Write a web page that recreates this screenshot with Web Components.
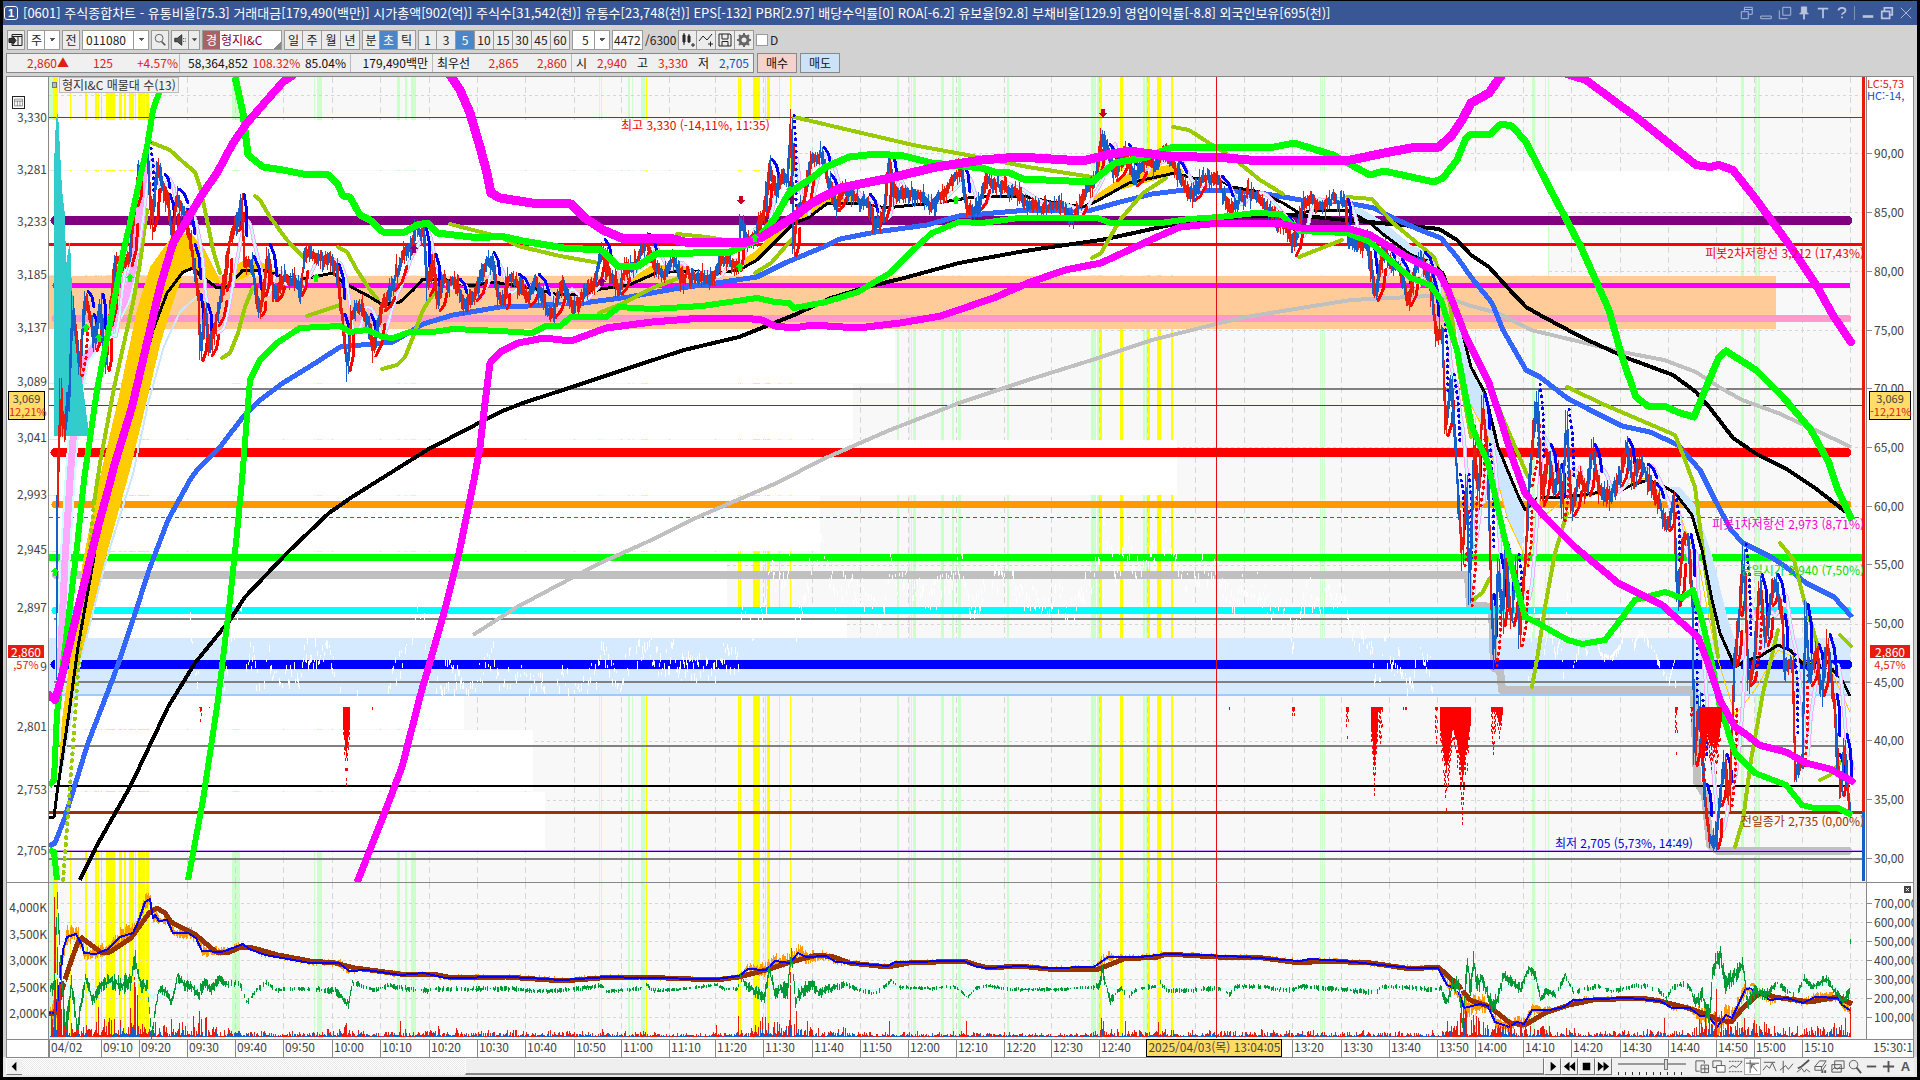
<!DOCTYPE html>
<html lang="ko">
<head>
<meta charset="utf-8">
<title>[0601] 주식종합차트</title>
<style>
  html, body { margin: 0; height: 100%; background: #000; }
  body { font: 12px/14px "Noto Sans CJK KR", "Noto Sans", sans-serif; color: #111; overflow: hidden; }
</style>
</head>
<body>
<trade-window>
  <title-bar slot="title">[0601] 주식종합차트 - 유통비율[75.3] 거래대금[179,490(백만)] 시가총액[902(억)] 주식수[31,542(천)] 유통수[23,748(천)] EPS[-132] PBR[2.97] 배당수익률[0] ROA[-6.2] 유보율[92.8] 부채비율[129.9] 영업이익률[-8.8] 외국인보유[695(천)]</title-bar>
  <chart-toolbar slot="tools"></chart-toolbar>
  <quote-bar slot="quote"></quote-bar>
  <stock-chart slot="chart"></stock-chart>
  <chart-footer slot="footer"></chart-footer>
</trade-window>

<script>
// ---------------------------------------------------------------------------
// Base element
// ---------------------------------------------------------------------------

class BaseElement extends HTMLElement {
  constructor() {
    super();
    this.attachShadow({ mode: 'open' });
  }
  connectedCallback() {
    this.shadowRoot.innerHTML = `<style>:host,*{box-sizing:border-box}${this.css()}</style>${this.template()}`;
  }
  css() { return ''; }
  template() { return ''; }
}

const icon = (body, w = 16, h = 16) =>
  `<svg width="${w}" height="${h}" viewBox="0 0 16 16" fill="none" stroke="currentColor" aria-hidden="true">${body}</svg>`;

// ---------------------------------------------------------------------------
// Frame
// ---------------------------------------------------------------------------

class TradeWindow extends BaseElement {
  css() {
    return `
      :host { display: grid; height: 100vh; padding: 1px 3px 3px 3px;
        grid-template-rows: 24px 27px 24px minmax(0, 1fr) 20px; background: #000; }
      .row { background: #d2d2d2; padding: 0 3px; min-width: 0; min-height: 0; display: grid; }
      .title { background: #3a5795; padding: 0; }
      .foot { background: #e8e8e8; }
    `;
  }
  template() {
    return `
      <div class="row title"><slot name="title"></slot></div>
      <div class="row"><slot name="tools"></slot></div>
      <div class="row"><slot name="quote"></slot></div>
      <div class="row"><slot name="chart"></slot></div>
      <div class="row foot"><slot name="footer"></slot></div>
    `;
  }
}

class TitleBar extends BaseElement {
  css() {
    return `
      :host { display: flex; align-items: center; gap: 5px; color: #fff; padding: 0 3px 0 1px; font-size: 13px; line-height: 20px; white-space: nowrap; }
      .no { width: 14px; height: 14px; border: 1px solid #fff; border-radius: 3px; font: bold 11px/12px "Liberation Sans", sans-serif; text-align: center; }
      .text { flex: 1; overflow: hidden; }
      nav { display: flex; align-items: center; gap: 2px; color: #b9c4dd; }
      button { all: unset; width: 17px; height: 18px; display: grid; place-items: center; }
      i { width: 1px; height: 14px; background: #7f90b8; margin: 0 2px; }
    `;
  }
  template() {
    const b = (name, body) => `<button aria-label="${name}">${icon(body, 14, 14)}</button>`;
    return `
      <span class="no">1</span><span class="text"><slot></slot></span>
      <nav>
        ${b('분리', '<path d="M5 1.5h9v8h-4M5 1.5v4M1.5 6.5h8v8h-8zM5 4h9"/>')}
        ${b('줄이기', '<path d="M2 11.5h12v3H2z"/>')}
        ${b('복사', '<path d="M5.5 1.5h9v9h-9zM1.5 5v9.5H11"/>')}
        ${b('고정', '<path fill="currentColor" d="M5 1h6v6l2 2H3l2-2zM7.500 9h1v6h-1z"/>')}
        ${b('글자', '<path stroke-width="2" d="M2 3h12M8 3v11"/>')}
        ${b('도움말', '<path stroke-width="2" d="M4 5c0-4 8-4 8 0 0 3-4 3-4 5M8 12v2"/>')}
        <i></i>
        ${b('최소화', '<path stroke-width="3" d="M2 12h12"/>')}
        ${b('복원', '<path stroke-width="2" d="M5 5V2h9v8h-3M2 6h9v8H2z"/>')}
        ${b('닫기', '<path d="M2 2l12 12M14 2L2 14"/>')}
      </nav>`;
  }
}

class ChartToolbar extends BaseElement {
  css() {
    return `
      :host { display: flex; align-items: center; gap: 2px; padding-left: 1px; padding-top: 2px; color: #222; }
      button, input, select, .name { font: inherit; height: 20px; margin: 0; color: inherit; border: 1px solid #9a9a9a; border-radius: 0; background: #ececec; }
      button { padding: 0; width: 18px; display: inline-grid; place-items: center; }
      input[type=text], select { background: #fff; padding: 0 3px; }
      select { appearance: none; padding-right: 16px;
        background: linear-gradient(#9a9a9a, #9a9a9a) right 14px top / 1px 100% no-repeat,
          conic-gradient(from -45deg at 50% 100%, #555 25%, transparent 0) right 4px center / 6px 3px no-repeat, #fff; }
      .seg { display: flex; }
      .seg button + button { border-left: 0; }
      .seg .on { background: #4a86c8; color: #fff; }
      .seg.min button { width: 19px; }
      .name { width: 80px; display: flex; line-height: 18px; color: #800040; background: linear-gradient(135deg, #fff 92%, #888 0);}
      .name b { width: 17px; background: #a86464; color: #fff; font-weight: 400; text-align: center; margin-right: 1px; }
      .slash { width: 31px; }
      label { display: inline-flex; align-items: center; gap: 2px; }
      input[type=checkbox] { appearance: none; width: 12px; height: 12px; background: #fff; }
    `;
  }
  template() {
    const seg = (list, on, cls = '') =>
      `<div class="seg ${cls}">${list.map(t => `<button class="${t === on ? 'on' : ''}">${t}</button>`).join('')}</div>`;
    return `
      <button aria-label="목록">${icon('<path d="M4 2.500h10v11H4zM4 4.500h10"/><path d="M10 5v8"/><path fill="#333" d="M1 6.500h4v-2l3 4-3 4v-2H1z"/>')}</button>
      <select aria-label="구분" style="width:33px"><option>주</option></select>
      <button>전</button>
      <select aria-label="종목코드" style="width:67px"><option>011080</option></select>
      <button aria-label="검색">${icon('<circle cx="7" cy="6" r="4.500" stroke="#555"/><path stroke="#555" stroke-width="2" d="M10 10l4 4"/>', 14, 14)}</button>
      <div class="seg"><button aria-label="소리">${icon('<path fill="#555" d="M2 6h3l5-4v12L5 10H2zM12 6v1M14 6v1M12 9v1M14 9v1"/>', 14, 14)}</button><button style="width:11px" aria-label="소리 메뉴">${icon('<path fill="#444" stroke="none" d="M2 5h12l-6 7z"/>', 7, 7)}</button></div>
      <div class="name"><b>경</b><span>형지I&amp;C</span></div>
      ${seg(['일', '주', '월', '년'], '', 'min')}
      ${seg(['분', '초', '틱'], '초')}
      ${seg(['1', '3', '5', '10', '15', '30', '45', '60'], '5', 'min')}
      <select aria-label="간격" style="width:38px;padding-left:9px"><option>5</option></select>
      <input type="text" aria-label="봉수" value="4472" style="width:31px;padding:0 1px"><span class="slash">/6300</span>
      <div class="seg min">
        <button aria-label="봉 추가">${icon('<path fill="#444" d="M3 3h2v7H3zM8 4h2v6H8zM4 1v12M9 2v9M11 13h4M13 11v4"/>')}</button>
        <button aria-label="지표 추가">${icon('<path d="M1 9l4-5 4 4 5-6M10 12h5M12.500 9.500v5"/>')}</button>
        <button aria-label="저장">${icon('<path d="M2 2h11l1 1v11H2zM5 2v5h6V2M5 14V9.500h6V14"/>')}</button>
        <button aria-label="설정">${icon('<circle cx="8" cy="8" r="4" stroke-width="3" stroke="#666"/><path stroke="#666" stroke-width="2" d="M8 1v3M8 12v3M1 8h3M12 8h3M3 3l2 2M11 11l2 2M13 3l-2 2M5 11l-2 2"/>')}</button>
      </div>
      <label><input type="checkbox">D</label>`;
  }
}

class QuoteBar extends BaseElement {
  css() {
    return `
      :host { display: flex; align-items: flex-start; gap: 3px; padding-top: 1px; }
      .cells { display: flex; height: 20px; border: 1px solid #888; background: #f0f0f0; line-height: 18px; }
      .c { display: flex; justify-content: space-between; white-space: nowrap; padding: 0 4px; border-left: 1px solid #bbb; }
      .c:first-child { border: 0; padding-right: 1px; }
      .c.lead { justify-content: flex-end; gap: 24px; }
      .c.mid { padding-left: 8px; }
      .u { color: #e02010; } .d { color: #1050c8; }
      button { font: inherit; width: 40px; height: 20px; padding: 0; border: 1px solid #888; border-radius: 0; color: #111; }
      .buy { background: #f6d2cc; } .sell { background: #cce2f6; }
    `;
  }
  template() {
    const cell = (w, items, cls = '') => `<span class="c ${cls}" style="width:${w}px">${items.map(([t, c]) => `<span class="${c || ''}">${t}</span>`).join('')}</span>`;
    return `<div class="cells">
      ${cell(172, [['2,860▲', 'u'], ['125', 'u'], ['+4.57%', 'u']], 'lead')}
      ${cell(171, [['58,364,852'], ['108.32%', 'u'], ['85.04%']], 'mid')}
      ${cell(82, [[''], ['179,490백만']])}
      ${cell(139, [['최우선'], ['2,865', 'u'], ['2,860', 'u']])}
      ${cell(182, [['시'], ['2,940', 'u'], ['고'], ['3,330', 'u'], ['저'], ['2,705', 'd']])}
      </div>
      <button class="buy">매수</button><button class="sell">매도</button>`;
  }
}

// ---------------------------------------------------------------------------
// Chart data, in plot units
// ---------------------------------------------------------------------------

const PRICE = '54,817 57,600 58,500 60,430 61,380 64,437 70,390 73,300 77,340 80,370 86,297 92,320 95,345 101,300 104,350 107,365 110,320 116,258 125,265 130,260 136,200 140,165 148,148 152,225 158,165 163,180 168,200 173,240 177,195 186,215 193,250 199,300 201,355 206,310 210,350 217,320 225,285 230,240 237,225 242,200 245,260 252,262 260,310 264,290 268,250 275,295 283,275 293,280 300,290 306,255 315,258 330,262 337,270 343,320 348,365 352,310 362,305 369,320 374,350 383,305 393,285 405,250 412,245 416,226 424,232 428,290 434,260 438,305 445,280 458,285 465,305 475,295 485,265 492,258 498,290 505,303 508,282 517,280 528,300 537,280 548,310 553,312 564,281 570,300 577,303 587,290 595,280 603,245 610,275 620,288 628,265 637,262 647,240 655,265 665,272 672,258 682,275 700,272 710,280 716,272 722,260 735,262 739,265 741,220 748,235 757,235 765,210 770,165 777,190 783,175 788,180 792,121 794,250 798,210 804,205 812,160 822,153 829,180 836,205 845,185 855,200 868,200 876,225 884,215 890,160 895,195 907,190 915,195 930,205 945,190 955,180 962,170 968,210 978,205 988,175 1000,185 1015,190 1028,200 1040,205 1060,205 1075,215 1085,195 1092,185 1098,170 1102,132 1108,150 1115,175 1127,150 1135,180 1145,160 1155,165 1165,150 1175,165 1185,185 1192,195 1203,175 1220,182 1231,210 1237,200 1250,192 1258,194 1266,205 1280,220 1287,222 1294,250 1301,215 1305,198 1320,202 1335,198 1346,205 1349,240 1358,240 1368,243 1376,295 1384,250 1393,270 1400,265 1409,300 1417,260 1423,258 1431,280 1437,340 1443,330 1446,430 1452,380 1458,480 1463,560 1467,480 1470,600 1475,440 1479,500 1483,400 1488,450 1492,600 1495,660 1499,560 1503,620 1506,550 1512,620 1517,560 1520,640 1526,560 1530,480 1538,390 1542,500 1549,450 1555,490 1560,470 1563,515 1567,415 1572,510 1580,475 1588,490 1593,450 1600,490 1610,495 1620,480 1627,445 1633,480 1640,460 1646,470 1655,490 1662,510 1668,525 1674,500 1678,600 1684,540 1689,540 1693,600 1695,760 1700,700 1705,790 1710,835 1716,843 1720,800 1725,760 1730,800 1735,660 1740,610 1744,550 1749,680 1755,660 1760,580 1766,640 1771,600 1776,580 1783,620 1785,670 1793,660 1796,775 1803,760 1806,610 1810,680 1817,650 1822,690 1828,640 1835,700 1838,760 1842,790 1845,740 1850,805';

const BLACK_SHORT = '49,817 54,817 57,793 69,713 78,647 94,557 99,523 115,470 130,415 147,353 153,330 167,293 183,272 193,268 200,275 217,288 227,287 243,270 263,270 283,277 303,279 333,273 343,282 357,290 370,297 383,305 400,302 413,290 423,279 447,280 470,286 493,282 532,288 555,294 583,295 601,289 629,285 656,273 684,271 716,273 739,270 757,260 775,242 794,223 808,218 828,203 858,203 886,208 913,205 936,203 968,198 1000,196 1028,197 1051,202 1083,207 1097,201 1129,183 1152,178 1175,173 1193,178 1220,180 1232,187 1260,192 1283,203 1299,213 1319,210 1347,210 1370,223 1384,235 1411,255 1430,262 1443,273 1457,310 1471,367 1485,393 1498,447 1517,493 1525,510 1538,498 1565,497 1595,493 1618,492 1632,485 1648,480 1665,487 1675,493 1692,515 1702,550 1712,600 1720,633 1735,667 1747,660 1759,657 1778,645 1790,650 1802,663 1830,667 1842,680 1850,696';

// [points, colour, width]
const CURVES = [
  ['473,635 517,607 600,563 645,543 698,517 779,482 821,460 890,430 959,403 1028,380 1092,360 1152,340 1220,323 1246,317 1301,308 1351,300 1430,296 1448,298 1471,306 1498,313 1531,330 1581,342 1622,352 1664,360 1696,372 1719,387 1742,400 1778,413 1815,430 1851,447', '#c0c0c0', 4],
  ['80,880 96,847 130,787 168,707 195,663 230,620 245,597 287,553 329,513 352,497 427,450 500,412 523,403 569,388 638,365 684,350 739,337 794,315 831,298 867,287 904,278 959,263 1019,252 1051,247 1101,240 1143,231 1170,225 1220,217 1292,215 1402,225 1439,229 1457,240 1471,255 1489,267 1508,288 1526,307 1540,315 1581,337 1627,358 1673,375 1696,392 1710,408 1733,438 1755,453 1788,470 1815,488 1846,512', '#000', 4],
  ['49,846 55,843 65,817 88,743 115,673 134,617 149,570 168,520 190,480 197,470 220,447 243,417 260,400 283,383 317,362 340,347 393,342 423,324 453,315 500,307 528,306 583,303 629,297 674,289 716,283 757,277 785,263 821,248 840,239 876,232 927,225 959,216 1028,210 1088,211 1120,202 1152,194 1184,190 1223,190 1260,193 1301,200 1342,202 1374,208 1393,218 1420,230 1441,238 1457,257 1471,277 1492,303 1503,330 1526,370 1540,377 1567,398 1590,410 1622,426 1650,432 1678,445 1700,470 1715,500 1731,530 1743,543 1771,557 1786,567 1806,583 1834,597 1852,617', '#3366ff', 5],
  ['49,850 54,852 57,880', '#00ff00', 6],
  ['49,786 54,780 57,713 65,647 77,547 84,480 97,390 110,323 123,253 133,210 147,147 153,110 160,90 166,73', '#00ff00', 6],
  ['235,77 243,113 248,155 263,167 283,170 303,174 327,174 337,183 343,196 350,197 360,215 370,220 383,232 405,232 417,225 428,223 437,233 480,238 500,236 523,241 564,248 601,250 619,267 638,266 656,254 693,253 730,252 757,240 775,218 789,193 812,178 826,167 849,157 876,154 904,156 932,163 982,168 994,172 1010,173 1023,179 1092,182 1115,163 1147,157 1170,148 1220,147 1269,148 1294,143 1333,155 1370,175 1384,171 1434,182 1443,178 1457,160 1466,138 1471,134 1489,135 1501,124 1512,126 1526,142 1549,187 1581,247 1609,310 1622,357 1636,397 1648,406 1664,406 1680,413 1694,417 1705,390 1719,357 1726,351 1756,370 1783,397 1811,430 1829,463 1838,490 1852,520', '#00ff00', 7],
  ['188,880 203,800 218,700 230,600 237,533 242,480 247,417 250,380 260,360 277,343 300,328 340,326 350,332 367,330 383,337 393,338 410,332 433,332 453,329 500,331 532,333 546,326 560,326 571,317 606,317 619,307 652,309 702,306 757,298 775,302 789,303 794,308 826,302 858,292 890,273 913,250 932,233 959,222 982,223 1019,218 1097,218 1111,223 1161,223 1189,219 1220,217 1255,213 1280,214 1300,231 1347,233 1370,242 1393,263 1411,278 1430,285 1441,300 1457,350 1466,397 1472,427 1488,463 1502,527 1515,580 1525,617 1538,623 1555,633 1568,640 1582,644 1605,640 1618,623 1635,600 1665,592 1682,598 1693,590 1702,620 1712,663 1720,707 1735,753 1755,773 1786,785 1802,805 1814,808 1838,808 1852,815', '#00ff00', 6],
  ['49,695 55,700 61,680 77,613 99,523 108,490 115,463 132,407 150,330 160,287 173,243 187,220 203,193 217,173 233,143 247,123 267,100 283,82 293,75', '#ff00ff', 8],
  ['450,75 460,90 470,113 480,147 487,173 491,193 500,198 532,203 571,204 585,218 603,230 624,239 670,238 684,242 743,243 762,237 789,220 812,203 840,188 890,178 936,167 982,160 1019,157 1083,161 1106,155 1129,151 1166,156 1227,158 1260,161 1351,160 1384,153 1411,148 1439,147 1452,135 1462,120 1471,103 1489,93 1498,80 1505,70', '#ff00ff', 9],
  ['1567,74 1586,80 1636,117 1696,165 1710,167 1719,165 1733,170 1755,198 1788,243 1815,283 1834,317 1851,342', '#ff00ff', 8],
  ['358,880 383,817 402,767 421,693 444,613 459,553 474,480 480,447 485,403 490,363 500,352 518,343 544,338 571,341 606,328 652,322 702,318 743,318 762,320 775,326 794,328 812,325 858,328 900,323 941,316 973,305 996,297 1028,283 1065,270 1101,263 1129,250 1157,237 1180,227 1220,223 1278,223 1301,228 1347,228 1370,235 1407,257 1439,273 1448,290 1466,337 1489,383 1498,410 1512,457 1525,493 1545,517 1575,547 1618,583 1662,605 1682,623 1698,637 1708,663 1720,700 1735,727 1747,735 1759,745 1786,752 1806,763 1830,769 1852,781', '#ff00ff', 7],
];

const OLIVE = [
  '150,142 170,150 183,162 195,172 200,187 207,220 213,250 220,273',
  '94,503 100,463 115,383 133,303 140,263 147,210',
  '255,196 260,200 270,217 287,240 305,259', '222,358 230,353 238,333 245,307 253,287',
  '338,247 347,252 357,270 370,290 378,300', '307,316 340,305',
  '382,369 397,365 405,357 413,337 423,310 437,288', '450,224 500,237 518,246 560,256 599,263',
  '599,313 624,303 652,288 679,278', '677,234 707,237 730,241', '755,273 771,263 794,237',
  '794,117 849,130 913,145 978,157 1028,167 1092,177', '1092,258 1101,253 1120,220 1143,193 1166,178',
  '1173,127 1189,130 1209,143 1232,157 1260,180 1283,194', '1299,257 1342,240',
  '1347,197 1372,199 1393,223 1434,257 1450,303 1459,370 1471,437', '1498,407 1528,477',
  '1473,600 1482,593 1490,578', '1532,687 1538,653 1545,607 1555,553 1567,513',
  '1567,387 1605,405 1675,435 1685,460 1695,487 1700,527 1705,567 1718,657',
  '1735,847 1743,820 1751,760 1763,693 1778,630', '1780,543 1794,560 1804,600 1820,653',
  '1840,635 1851,646', '1820,780 1830,775 1840,762',
];

// [y, colour, width, x1, x2, cap]
const LEVELS = [
  [117, '#f00000', 1, 49, 1863], [220, '#800080', 9, 55, 1848, 1], [244, '#ff0000', 3, 49, 1863],
  [285, '#ff00ff', 5, 55, 1848, 1], [318, '#ff99cc', 7, 55, 1848, 1], [389, '#808080', 2, 49, 1863],
  [405, '#e00000', 1, 49, 1863], [452, '#ff0000', 9, 55, 1847, 1], [504, '#ff9900', 7, 55, 1848, 1],
  [557, '#00ff00', 7, 49, 1863], [610, '#00ffff', 7, 55, 1848, 1], [619, '#808080', 2, 54, 1850],
  [664, '#0000ff', 9, 55, 1848, 1], [682, '#808080', 2, 54, 1850], [695, '#99ccff', 2, 49, 1850],
  [746, '#808080', 2, 54, 1850], [786, '#000000', 2, 54, 1850], [812, '#993300', 3, 49, 1863],
  [850, '#cc99ff', 1, 49, 1863], [851, '#0000e0', 1, 49, 1863], [859, '#808080', 2, 49, 1863],
];

// profile boxes: [top, bottom, right]
const BOXES = [[120, 170, 790], [171, 212, 1743], [212, 275, 1548], [329, 383, 895], [384, 439, 853], [440, 495, 1177], [496, 551, 820], [552, 608, 727], [608, 638, 847], [696, 729, 464], [730, 791, 533], [792, 850, 545]];

const YELLOW = [[53, 5], [70, 1], [85, 2], [95, 2], [98, 1], [101, 1], [106, 9], [119, 3], [124, 2], [129, 5], [135, 1], [138, 7], [146, 3], [646, 1], [738, 1], [740, 1], [753, 7], [765, 1], [767, 3], [779, 1], [790, 1], [1100, 2], [1120, 3], [1148, 2], [1157, 4], [1171, 2]];
const GREEN = [[49, 4], [232, 8], [314, 1], [317, 5], [397, 3], [405, 2], [411, 5], [599, 1], [601, 1], [628, 2], [632, 1], [641, 4], [897, 2], [909, 1], [911, 1], [913, 3], [941, 3], [952, 2], [958, 3], [1007, 2], [1091, 5], [1097, 3], [1143, 2], [1146, 2], [1320, 1], [1322, 1], [1324, 1], [1532, 3], [1545, 1], [1548, 1], [1741, 3], [1755, 2], [1758, 2]];

const TIMES = [[49, '04/02'], [101, '09:10'], [139, '09:20'], [187, '09:30'], [235, '09:40'], [283, '09:50'], [332, '10:00'], [380, '10:10'], [429, '10:20'], [477, '10:30'], [525, '10:40'], [574, '10:50'], [621, '11:00'], [669, '11:10'], [715, '11:20'], [763, '11:30'], [812, '11:40'], [860, '11:50'], [908, '12:00'], [956, '12:10'], [1004, '12:20'], [1051, '12:30'], [1099, '12:40'], [1147, ''], [1195, ''], [1244, ''], [1292, '13:20'], [1341, '13:30'], [1389, '13:40'], [1437, '13:50'], [1475, '14:00'], [1523, '14:10'], [1571, '14:20'], [1620, '14:30'], [1668, '14:40'], [1716, '14:50'], [1754, '15:00'], [1802, '15:10']];

const BROWN = '48,1013 55,1013 61,993 69,967 78,942 82,938 102,953 110,952 131,938 149,913 157,908 165,913 171,922 196,935 216,952 227,953 241,947 253,948 278,955 310,961 335,963 355,968 400,974 433,974 453,978 506,977 563,981 600,978 640,977 716,980 739,977 766,970 791,962 817,955 834,957 850,963 888,967 909,963 964,961 977,965 989,968 1019,966 1048,969 1099,969 1124,959 1158,957 1166,954 1217,957 1263,958 1300,963 1324,961 1371,963 1411,969 1438,967 1458,985 1470,1000 1490,1007 1510,1023 1525,1025 1545,1013 1569,1005 1593,1000 1640,998 1660,1001 1684,1007 1703,1013 1719,1020 1731,1022 1743,1008 1755,997 1763,992 1774,997 1810,1002 1838,997 1852,1004';
const BLUE = '49,1013 55,1013 58,1000 63,950 67,937 76,934 82,945 84,953 96,954 108,949 120,937 133,933 139,920 145,902 150,899 153,918 155,915 159,921 167,920 173,933 188,933 196,938 202,951 222,952 243,944 249,949 265,955 282,958 310,963 339,963 349,971 367,970 400,975 424,973 445,978 510,977 563,980 608,977 640,978 716,979 739,976 748,969 766,970 775,961 790,963 798,953 806,957 826,956 836,962 888,966 895,962 964,961 977,967 989,968 1020,966 1048,968 1094,967 1108,957 1140,957 1166,954 1230,956 1300,961 1310,959 1345,961 1371,964 1411,968 1438,968 1447,985 1458,990 1464,1008 1472,1006 1480,1004 1488,1006 1495,1022 1509,1027 1517,1022 1524,1024 1532,1010 1550,1010 1564,1007 1573,1000 1593,999 1629,998 1660,1001 1672,1008 1690,1008 1700,1016 1709,1017 1717,1027 1726,1015 1732,1018 1745,990 1750,988 1762,995 1770,1000 1787,998 1803,1003 1815,997 1838,998 1842,1005 1850,1010';

// oscillator bursts: [x, target y]
const OSC = '49,989 54,985 57,900 60,960 65,1030 71,985 77,1030 85,975 92,1000 100,985 110,980 120,985 130,980 135,958 140,985 147,985 151,1036 158,990 165,990 171,1003 177,975 185,985 192,986 198,995 204,980 210,990 219,978 226,984 239,982 246,1002 256,990 267,982 275,990 290,988 335,990 348,1004 352,982 362,985 374,990 388,985 410,989 428,990 440,988 460,989 506,988 545,991 580,988 602,985 606,991 640,988 645,983 652,990 680,989 716,984 725,989 737,988 740,976 747,986 764,996 769,970 775,995 780,988 787,990 791,955 795,1000 801,990 812,985 819,993 825,989 845,984 860,990 875,993 891,980 900,987 930,988 955,986 967,997 975,988 986,985 1010,989 1060,989 1098,986 1102,972 1110,1000 1121,987 1127,997 1137,988 1156,986 1160,982 1166,990 1180,990 1220,988 1229,994 1236,986 1260,986 1290,990 1300,986 1340,989 1375,992 1382,986 1410,987 1430,989 1440,987 1446,1003 1452,985 1458,985 1462,1020 1467,962 1470,990 1473,960 1477,985 1481,978 1486,990 1491,1005 1497,1000 1503,975 1510,980 1520,988 1528,968 1535,975 1540,998 1546,990 1555,995 1565,975 1573,992 1585,988 1600,986 1612,991 1625,987 1645,985 1655,988 1666,998 1672,987 1684,983 1690,988 1695,1003 1702,996 1709,1015 1712,975 1717,958 1720,955 1725,985 1735,975 1742,962 1747,1003 1755,990 1765,995 1776,982 1785,989 1795,995 1804,978 1812,987 1826,978 1832,988 1842,1000 1849,992 1850,940';

// ---------------------------------------------------------------------------
// SVG helpers
// ---------------------------------------------------------------------------

const points = s => s.split(' ').map(p => p.split(',').map(Number));
const line = (pts, color, width, extra = '') =>
  `<polyline points="${pts}" fill="none" stroke="${color}" stroke-width="${width}" ${extra}/>`;
const rect = (x, y, w, h, fill) => `<rect x="${x}" y="${y}" width="${w}" height="${h}" fill="${fill}"/>`;

// repeatable noise
function noise(seed) {
  let s = seed;
  return () => (s = (s * 16807) % 2147483647) / 2147483647;
}

function sampler(pts) {
  return x => {
    for (let i = 1; i < pts.length; i++) {
      if (x <= pts[i][0]) {
        const [a, b] = [pts[i - 1], pts[i]];
        return b[0] === a[0] ? b[1] : a[1] + (b[1] - a[1]) * (x - a[0]) / (b[0] - a[0]);
      }
    }
    return pts[pts.length - 1][1];
  };
}

function stripes(top, height) {
  return GREEN.map(([x, w]) => rect(x, top, w, height, '#ccffcc')).join('') +
    YELLOW.map(([x, w]) => rect(x, top, w, height, '#ffff00')).join('');
}

function grid(top, bottom, rows) {
  const v = TIMES.slice(1).map(([x]) => `M${x + 0.5} ${top}V${bottom}`).join('') + `M1850.5 ${top}V${bottom}`;
  const h = rows.map(y => `M49 ${y + 0.5}H1863`).join('');
  return `<path d="${v}" stroke="#d6d6d6" stroke-width="1" stroke-dasharray="6 4"/><path d="${h}" stroke="#d6d6d6" stroke-width="1" stroke-dasharray="3 3"/>`;
}

function candles() {
  const rnd = noise(77);
  const pts = points(PRICE);
  const at = sampler(pts);
  let red = '', blue = '', trail = '', pale = '';
  let up = true;
  let drift = 0;
  for (let x = 56; x <= 1850; x += 1) {
    if (rnd() < 0.45) up = !up;
    if (rnd() < 0.3) drift = (rnd() - 0.5) * 8;
    const y = at(x) + drift, next = at(x + 2) + drift;
    const wild = x > 1435 ? 14 : 12;
    const y1 = Math.min(y, next) - rnd() * rnd() * wild - 2;
    const y2 = Math.max(y, next) + rnd() * rnd() * wild + 4;
    const d = `M${x + 0.5} ${y1.toFixed(0)}V${y2.toFixed(0)}`;
    if (up) red += d; else blue += d;
    if (x % 3 === 0 && x > 90) pale += `${x + 5},${(at(x - 4) + at(x) + at(x - 8)) / 3 | 0} `;
  }
  for (let i = 1; i < pts.length; i++) {
    const [a, b] = [pts[i - 1], pts[i]];
    const dy = b[1] - a[1];
    if (a[0] < 80 || Math.abs(dy) < 20) continue;
    const color = dy > 0 ? '#0000ff' : '#ff0000';
    const shift = dy > 0 ? -6 : 6;
    const steep = Math.abs(dy) > 70;
    trail += line(`${a[0] + 2},${a[1] + shift} ${(a[0] + b[0]) / 2 + 3},${a[1] + dy * 0.25 + shift} ${b[0] + 2},${b[1] - dy * 0.3 + shift}`,
      color, 3, steep ? 'stroke-linecap="round" stroke-dasharray="1 5"' : 'stroke-linecap="round"');
  }
  return line(pale, '#ffaaff', 4) + line(pale, '#ccffff', 2) + trail +
    `<path d="${red}" stroke="#e81c0c" stroke-width="1"/><path d="${blue}" stroke="#1560c8" stroke-width="1"/>`;
}

function specks() {
  const rnd = noise(991);
  const at = sampler(points(PRICE));
  let d = '';
  for (let x = 190; x < 1690; x += 1) {
    if (x > 1440 && x < 1525) continue;
    const p = at(x);
    const y = x > 1500 ? 580 + (p - 400) * 0.8 : p + 392 + (rnd() - 0.5) * 30;
    if (rnd() < 0.25 || y > 690) continue;
    d += `M${x + 0.5} ${y.toFixed(0)}v${(2 + rnd() * 7).toFixed(0)}`;
  }
  return `<path d="${d}" stroke="#fff" stroke-width="1"/>`;
}

// red cones that hang below the lower band: [centre, half width, bottom]
function cones() {
  const rnd = noise(31);
  const list = [[200, 1, 722], [209, 0, 715], [346, 3, 785], [372, 0, 709], [1229, 0, 711], [1293, 1, 722], [1347, 1, 742], [1374, 3, 793], [1380, 2, 745], [1405, 2, 711], [1436, 1, 750], [1446, 6, 808], [1457, 6, 765], [1462, 5, 822], [1467, 3, 770], [1493, 2, 756], [1499, 3, 736], [1676, 1, 752], [1691, 1, 722], [1703, 4, 800], [1711, 9, 768], [1716, 5, 775]];
  let d = '';
  for (const [c, w, bottom] of list) {
    for (let x = c - w; x <= c + w; x++) {
      const depth = (bottom - 707) * (1 - Math.abs(x - c) / (w + 1) * 0.8);
      const solid = w > 2 ? 0.65 : 0.1;
      d += `M${x + 0.5} 707v${(depth * solid).toFixed(0)}`;
      for (let y = 707 + depth * solid; y < 707 + depth; y += 5) if (rnd() > 0.3) d += `M${x + 0.5} ${y.toFixed(0)}v3`;
    }
  }
  return `<path d="${d}" stroke="#ff0000" stroke-width="1"/>`;
}

const arrow = (x, y, color, dir) =>
  `<path fill="${color}" d="M${x - 3} ${y}h2v${-4 * dir}h4v${4 * dir}h2l-4 ${5 * dir}z"/>`;

// ---------------------------------------------------------------------------
// Plots
// ---------------------------------------------------------------------------

class PricePlot extends BaseElement {
  css() {
    return `
      :host { display: block; position: relative; overflow: hidden; min-height: 0; background: #f8f8f8; }
      svg { display: block; width: 100%; height: 100%; }
      .tag { position: absolute; white-space: nowrap; transform: translateY(-50%); }
      .legend { position: absolute; left: 3px; top: 0; display: flex; align-items: center; gap: 2px; color: #333; }
      .legend i { width: 5px; height: 6px; border: 1px solid #777; background: #bbb; }
      .legend b { font-weight: 400; line-height: 14px; padding: 0 2px; border: 1px solid #bbb; background: #f0f0f0; }
    `;
  }
  template() {
    const cut = (a, b) => points(BLACK_SHORT).filter(([x]) => x >= a && x <= b).map(p => p.join(',')).join(' ');
    const tag = (x, y, color, text, right) =>
      `<span class="tag" style="${right ? 'right:2px' : `left:${((x - 49) / 18.17).toFixed(2)}%`};top:${((y - 77) / 8.05).toFixed(2)}%;color:${color}">${text}</span>`;
    return `
      <svg viewBox="49 77 1817 805" preserveAspectRatio="none" shape-rendering="crispEdges" stroke-linejoin="round" role="img" aria-label="가격 차트">
        ${stripes(77, 805)}
        ${grid(77, 882, [95, 153, 212, 271, 330, 389, 447, 506, 565, 624, 683, 741, 800, 859])}
        ${BOXES.map(([t, b, r]) => rect(49, t, r - 49, b - t, '#fff')).join('')}
        ${rect(49, 276, 1727, 53, '#ffcc99')}
        ${rect(49, 638, 1801, 56, '#d6eaff')}
        ${line('56,575 1468,575 1470,605 1492,607 1494,668 1500,670 1502,690 1694,690 1697,782 1705,795 1710,845 1718,851 1848,851', '#c0c0c0', 8, 'stroke-linecap="round"')}
        ${LEVELS.map(([y, c, w, a, b, cap]) => line(`${a},${w % 2 ? y + 0.5 : y} ${b},${w % 2 ? y + 0.5 : y}`, c, w, cap ? 'stroke-linecap="round"' : '')).join('')}
        <path d="M49 517.500H1863" stroke="#e000d0" stroke-dasharray="4 3"/>
        ${specks()}
        ${line('60,670 65,560 70,480 76,400 84,360 95,345 110,330 125,300 133,270 140,200 147,160', '#ccffff', 11)}
        ${line('60,670 65,560 70,480 76,400 84,360 95,345 110,330 125,300 133,270 140,200 147,160', '#ffaaff', 7)}
        <polygon fill="#33cccc" points="54,436 54,165 56,118 58,113 60,150 62,190 65,215 66,265 70,240 72,290 78,350 82,380 89,434 89,436"/>
        <polygon fill="#ffcc00" points="58,780 62,720 83,560 100,477 118,400 137,310 150,267 173,235 190,232 205,250 215,270 222,285 200,275 190,268 183,274 172,305 160,345 147,400 130,470 105,560 80,660 62,770"/>
        ${line('62,770 80,664 105,564 133,474 148,404 164,346 180,312 196,297 206,300', '#cce6ff', 2)}
        <polygon fill="#ffcc00" points="730,268 757,250 775,230 794,212 828,197 850,195 870,203 828,205 794,224 757,262"/>
        <polygon fill="#ffcc00" points="1083,207 1100,192 1129,173 1152,168 1175,164 1185,172 1152,181 1120,190"/>
        <polygon fill="#ffcc00" points="225,287 240,262 256,258 280,275 256,272"/>
        <polygon fill="#ffcc00" points="620,286 650,266 684,264 690,271 656,274"/>
        <polygon fill="#cce6ff" points="${cut(1443, 1525)} 1522,550 1508,520 1498,483 1488,437 1468,400 1457,330"/>
        <polygon fill="#cce6ff" points="${cut(1665, 1735)} 1738,700 1742,660 1728,620 1712,555 1695,505 1680,487"/>
        <polygon fill="#cce6ff" points="${cut(1347, 1430)} 1436,256 1411,245 1384,222 1360,208"/>
        ${line('1443,275 1457,350 1468,400 1488,437 1498,483 1508,520 1522,550 1527,567 1538,520 1565,500 1600,494 1645,478 1680,515 1700,570 1715,650 1735,715 1755,690 1778,650 1800,660 1830,668 1850,712', '#ffcc00', 1)}
        ${CURVES.slice(0, 3).map(([p, c, w]) => line(p, c, w)).join('')}
        ${OLIVE.map(p => line(p, '#99cc00', 4, 'stroke-linecap="round"')).join('')}
        ${line('63,880 73,747 80,643 94,503', '#99cc00', 4, 'stroke-linecap="round" stroke-dasharray="1 6"')}
        ${line(BLACK_SHORT, '#000', 3)}
        ${candles()}
        ${CURVES.slice(3).map(([p, c, w]) => line(p, c, w, c === '#ff00ff' ? 'stroke-linecap="round"' : '')).join('')}
        ${cones()}
        ${arrow(740, 200, '#cc0022', 1)}${arrow(1102, 113, '#cc0022', 1)}
        ${[[85, 328], [98, 338], [129, 278], [315, 278], [54, 572], [789, 190], [955, 200], [739, 267], [754, 238]].map(([x, y]) => arrow(x, y, '#00ff00', -1)).join('')}
        ${[[413, 249], [601, 282], [791, 200]].map(([x, y]) => arrow(x, y, '#800080', -1)).join('')}
        <path d="M1216.500 77V882" stroke="#e01010"/>
        ${rect(1862, 77, 3, 735, '#e81c0c')}${rect(1862, 812, 3, 69, '#1560c8')}
      </svg>
      <div class="legend"><i></i><b>형지I&amp;C 매물대 수(13)</b></div>
      ${tag(621, 125, '#f00000', '최고 3,330 (-14,11%, 11:35)')}
      ${tag(0, 253, '#f00000', '피봇2차저항선 3,212 (17,43%)', true)}
      ${tag(0, 524, '#f000d0', '피봇1차저항선 2,973 (8,71%)', true)}
      ${tag(0, 570, '#00e000', '당일시가 2,940 (7,50%)', true)}
      ${tag(0, 821, '#993300', '전일종가 2,735 (0,00%)', true)}
      ${tag(1555, 843, '#0000e0', '최저 2,705 (5,73%, 14:49)')}
    `;
  }
}

class VolumePlot extends BaseElement {
  css() {
    return `:host { display: block; overflow: hidden; min-height: 0; background: #f8f8f8; }
      svg { display: block; width: 100%; height: 100%; }`;
  }
  template() {
    const rnd = noise(5);
    const blueAt = sampler(points(BLUE));
    const oscAt = sampler(points(OSC));
    const power = sampler(points('49,5 54,60 60,50 63,25 80,20 90,12 110,18 130,22 140,18 160,10 200,14 230,7 300,4 345,9 370,4 400,6 640,4 730,3 765,16 795,18 830,9 860,4 1090,3 1102,12 1120,5 1160,5 1430,5 1445,10 1465,25 1490,18 1510,12 1530,10 1560,7 1600,5 1690,6 1700,20 1720,25 1750,14 1780,7 1850,10'));
    const spikes = { 54: 140, 55: 110, 57: 90, 59: 75, 98: 30, 134: 60, 135: 50, 137: 42, 171: 18, 199: 26, 201: 18, 346: 14, 400: 16, 438: 11, 602: 8, 716: 12, 738: 21, 765: 20, 790: 65, 889: 16, 966: 16, 1101: 19, 1125: 16, 1158: 15, 1262: 7, 1466: 26, 1473: 22, 1664: 19, 1716: 48, 1721: 26, 1845: 19, 1850: 30 };
    let red = '', blue = '', orange = '', osc = '', mean = '';
    for (let x = 50; x <= 1850; x += 1) {
      const p = power(x);
      const cx = x + 0.5;
      const h = spikes[x] || 1 + rnd() * rnd() * p * 1.5;
      const b = rnd() < 0.4 ? 0 : Math.min(h, rnd() * p * 0.6 + 1);
      red += `M${cx} 1037v${-h.toFixed(0)}`;
      blue += `M${cx} 1037v${-b.toFixed(0)}`;
      const y = blueAt(x);
      if (p > 8 || rnd() < 0.3) orange += `M${cx} ${(y - 1 - rnd() * p * 0.5).toFixed(0)}V${(y + 1 + rnd() * p * 0.4).toFixed(0)}`;
      const o = oscAt(x);
      const spread = Math.min(14, p * 0.5);
      if (rnd() > 0.4 || p > 8) osc += `M${cx} ${(o - rnd() * spread).toFixed(0)}V${(o + 1 + rnd() * spread).toFixed(0)}`;
      if (x % 4 === 0) mean += `${x},${(988 + ((oscAt(x) + oscAt(x - 8)) / 2 - 988) * 0.5).toFixed(0)} `;
    }
    return `
      <svg viewBox="49 883 1817 156" preserveAspectRatio="none" shape-rendering="crispEdges" stroke-linejoin="round" role="img" aria-label="거래량 차트">
        ${stripes(883, 155)}
        ${grid(883, 1038, [903, 922, 941, 960, 979, 998, 1017])}
        <path d="${orange}" stroke="#ff9900"/>
        ${line(BROWN, '#993300', 5)}
        ${line(BLUE, '#0000ff', 2)}
        <path d="${red}" stroke="#e81c0c"/>
        ${line(mean, '#ccffff', 2)}
        <path d="${osc}" stroke="#009933"/>
        <path d="${blue}" stroke="#1560c8"/>
        <path d="M1216.500 883V1038" stroke="#e01010"/>
      </svg>`;
  }
}

// ---------------------------------------------------------------------------
// Axes
// ---------------------------------------------------------------------------

/** Vertical scale. `ticks` holds "y label" pairs separated by "|". */
class ValueAxis extends BaseElement {
  css() {
    return `
      :host { display: block; position: relative; overflow: hidden; min-height: 0; background: #fff; color: #444; }
      .t { position: absolute; left: 0; line-height: 14px; transform: translateY(-50%); white-space: nowrap; }
      :host([side=left]) .t { left: auto; right: 1px; }
      :host([side=right]) { border-left: 1px solid #888; }
      :host([side=right]) .t { left: 7px; }
      :host([side=right]) .t::before { content: ""; position: absolute; left: -7px; top: 7px; width: 5px; height: 1px; background: #888; }
    `;
  }
  template() {
    const [from, to] = this.getAttribute('range').split(' ').map(Number);
    return this.getAttribute('ticks').split('|').map(t => {
      const [y, label] = t.split(' ');
      return `<span class="t" style="top:${((y - from) / (to - from) * 100).toFixed(2)}%">${label}</span>`;
    }).join('') + '<slot></slot>';
  }
}

class TimeAxis extends BaseElement {
  css() {
    return `
      :host { display: grid; position: relative; background: #fff; border-top: 1px solid #888; color: #444; line-height: 14px;
        grid-template-columns: ${TIMES.map(([x], i) => `${(TIMES[i + 1] ? TIMES[i + 1][0] : 1866) - x}fr`).join(' ')}; }
      span { border-left: 1px solid #888; padding-left: 1px; min-width: 0; white-space: nowrap; }
      span:first-child { font-weight: 700; border: 0; }
      .cursor { position: absolute; left: 60.4%; top: -1px; height: 18px; padding: 0 1px; border: 1px solid #000; background: #ffdd66; white-space: nowrap; }
    `;
  }
  template() {
    return TIMES.map(([, t]) => `<span>${t}</span>`).join('') + '<div class="cursor">2025/04/03(목) 13:04:05</div>';
  }
}

class StockChart extends BaseElement {
  css() {
    return `
      :host { display: grid; min-height: 0; border: solid #888; border-width: 1px 1px 0 1px;
        grid-template-columns: 42px minmax(0, 1fr) 47px; grid-template-rows: minmax(0, 806fr) minmax(0, 156fr) 18px; background: #fff; }
      .main { border-bottom: 1px solid #888; }
      value-axis[side=left] { border-right: 1px solid #888; }
      .now, .cur { position: absolute; white-space: nowrap; text-align: center; font-size: 11px; }
      .cur { top: 39%; left: 1px; width: 37px; height: 29px; border: 1px solid #000; background: #ffdd66; line-height: 13px; }
      .cur.r { left: 2px; width: 42px; }
      .cur b, .now b { display: block; font-weight: 400; }
      .cur b + b { color: #e02010; }
      .now { top: 70.500%; left: 1px; width: 36px; color: #e02010; line-height: 13px; }
      .now b:first-child { background: #e81c0c; color: #fff; font-size: 12px; }
      .now.r { left: 3px; width: 40px; }
      .lc { position: absolute; left: 0; top: 0; font-size: 11px; line-height: 12px; color: #e02010; white-space: nowrap; }
      .lc b { display: block; font-weight: 400; color: #1050c8; }
      .grid { all: unset; position: absolute; left: 5px; top: 19px; width: 11px; height: 11px; border: 1px solid #222; display: grid; place-items: center; color: #444; }
      .x { all: unset; position: absolute; right: 2px; top: 3px; width: 7px; height: 7px; display: grid; place-items: center; background: #444; color: #fff; }
      .corner { border-top: 1px solid #888; color: #444; line-height: 14px; padding-left: 7px; white-space: nowrap; }
      .left { border-right: 1px solid #888; padding: 0; }
    `;
  }
  template() {
    return `
      <value-axis class="main" side="left" range="77 883" ticks="117 3,330|169 3,281|221 3,233|274 3,185|327 3,137|381 3,089|437 3,041|494 2,993|550 2,945|608 2,897|667 9|727 2,801|790 2,753|851 2,705">
        <button class="grid" aria-label="표">${icon('<path d="M1 2h14v12H1zM1 5.500h14M6 5v9M10.500 5v9"/>', 9, 9)}</button>
        <div class="cur"><b>3,069</b><b>12,21%</b></div>
        <div class="now"><b>2,860</b><b>,57%</b></div>
      </value-axis>
      <price-plot class="main"></price-plot>
      <value-axis class="main" side="right" range="77 883" ticks="153 90,00|212 85,00|271 80,00|330 75,00|388 70,00|447 65,00|506 60,00|565 55,00|624 50,00|683 45,00|741 40,00|800 35,00|859 30,00">
        <div class="lc">LC:5,73<b>HC:-14,</b></div>
        <div class="cur r"><b>3,069</b><b>-12,21%</b></div>
        <div class="now r"><b>2,860</b><b>4,57%</b></div>
      </value-axis>
      <value-axis side="left" range="883 1039" ticks="907 4,000K|934 3,500K|960 3,000K|987 2,500K|1013 2,000K"></value-axis>
      <volume-plot></volume-plot>
      <value-axis side="right" range="883 1039" ticks="903 700,000|922 600,000|941 500,000|960 400,000|979 300,000|998 200,000|1017 100,000"><button class="x" aria-label="닫기">${icon('<path stroke-width="3" d="M3 3l10 10M13 3L3 13"/>', 5, 5)}</button></value-axis>
      <div class="corner left"></div>
      <time-axis></time-axis>
      <div class="corner">15:30:1</div>
    `;
  }
}

// ---------------------------------------------------------------------------
// Footer: scroll bar, playback, chart tools
// ---------------------------------------------------------------------------

class ChartFooter extends BaseElement {
  css() {
    return `
      :host { display: grid; grid-template-columns: 16px 443fr 1079fr auto; height: 18px; border-top: 1px solid #888; background: #f0f0f0; }
      button { all: unset; box-sizing: border-box; height: 17px; width: 17px; display: grid; place-items: center; color: #555; }
      .box { color: #000; background: #f0f0f0; border: 1px solid #fff; border-right-color: #777; border-bottom-color: #777; }
      .track { background: repeating-conic-gradient(#fff 0 25%, #e8e8e8 0 50%) 0 0 / 2px 2px; }
      .thumb { background: #efefef; border: 1px solid #fff; border-right-color: #777; border-bottom: 2px solid #888; }
      .tools { display: flex; align-items: center; }
      .on { background: #fff; border: 1px solid #aaa; }
      input { appearance: none; width: 68px; height: 16px; margin: 0 7px 0 6px;
        background: linear-gradient(#999, #999) 0 4px / 100% 2px no-repeat, repeating-linear-gradient(90deg, #333 0 1px, transparent 1px 7px) 0 13px / 100% 3px no-repeat; }
      input::-webkit-slider-thumb { appearance: none; width: 4px; height: 11px; margin-top: -4px; background: #ddd; border: 1px solid #777; }
    `;
  }
  template() {
    const b = (name, body, cls = '') => `<button class="${cls}" aria-label="${name}">${icon(body, 15, 15)}</button>`;
    const tri = x => `M${x} 3v10l6-5z`;
    const rev = x => `M${x} 3v10l-6-5z`;
    return `
      ${b('왼쪽', '<path fill="#000" stroke="none" d="M10 3v10L5 8z"/>', 'box')}
      <div class="track"></div><div class="thumb"></div>
      <div class="tools">
        ${b('재생', `<path fill="#000" stroke="none" d="${tri(6)}"/>`, 'box')}
        ${b('뒤로', `<path fill="#000" stroke="none" d="${rev(8)}${rev(14)}"/>`, 'box')}
        ${b('정지', '<path fill="#000" stroke="none" d="M4 4h8v8H4z"/>', 'box')}
        ${b('앞으로', `<path fill="#000" stroke="none" d="${tri(2)}${tri(8)}"/>`, 'box')}
        <input type="range" aria-label="확대" min="0" max="100" value="72">
        ${b('추가', '<path d="M2 2h9v3M2 2v11h4M7.500 6.500h8v8h-8zM11.500 7v7M8 10.500h7"/>')}
        ${b('창', '<path d="M2 2h9v7H2z"/><path fill="#fff" d="M6 7h9v7H6z"/>')}
        ${b('선', '<path d="M1 10l4-3 4 2 6-6"/><path stroke-dasharray="2 1" d="M1 2.500h14M1 13.500h14"/>')}
        ${b('십자선', '<path d="M1 4.500h14M5.500 1v14M7 6l6 7M7 6v4M7 6h4"/>', 'on')}
        ${b('추세', '<path d="M2 3.500h12M1 12l4-5 3 3 3-6 4 9"/>')}
        ${b('변동', '<path d="M4.500 2v13M1 12l6-5 3 4 5-6"/>')}
        ${b('그리기', '<path stroke-width="2" d="M2 10l4-2 8-7"/><path d="M1 14l5-4 3 4 2-3 4 3"/>')}
        ${b('지우개', '<path d="M2 8l5-6h7l-4 6zM2 8v4h7V8M10 12l4-6"/><path stroke-width="2" d="M10 12v3M13 12v3"/>')}
        ${b('복제', '<path d="M5 2h10v8H5zM2 6h10v8H2zM2 12l3-3 3 2 3-3"/>')}
        ${b('돋보기', '<circle cx="7" cy="6" r="4.500"/><path stroke-width="2" d="M10 9l5 6"/>')}
        ${b('축소', '<path stroke-width="2" d="M3 8h10"/>')}
        ${b('확대', '<path stroke-width="2" d="M2 8h12M8 2v12"/>')}
        <button style="font:bold 13px/16px 'Liberation Sans',sans-serif;text-align:center">A</button>
      </div>`;
  }
}

customElements.define('title-bar', TitleBar);
customElements.define('chart-toolbar', ChartToolbar);
customElements.define('quote-bar', QuoteBar);
customElements.define('price-plot', PricePlot);
customElements.define('volume-plot', VolumePlot);
customElements.define('value-axis', ValueAxis);
customElements.define('time-axis', TimeAxis);
customElements.define('stock-chart', StockChart);
customElements.define('chart-footer', ChartFooter);
customElements.define('trade-window', TradeWindow);
</script>
</body>
</html>
